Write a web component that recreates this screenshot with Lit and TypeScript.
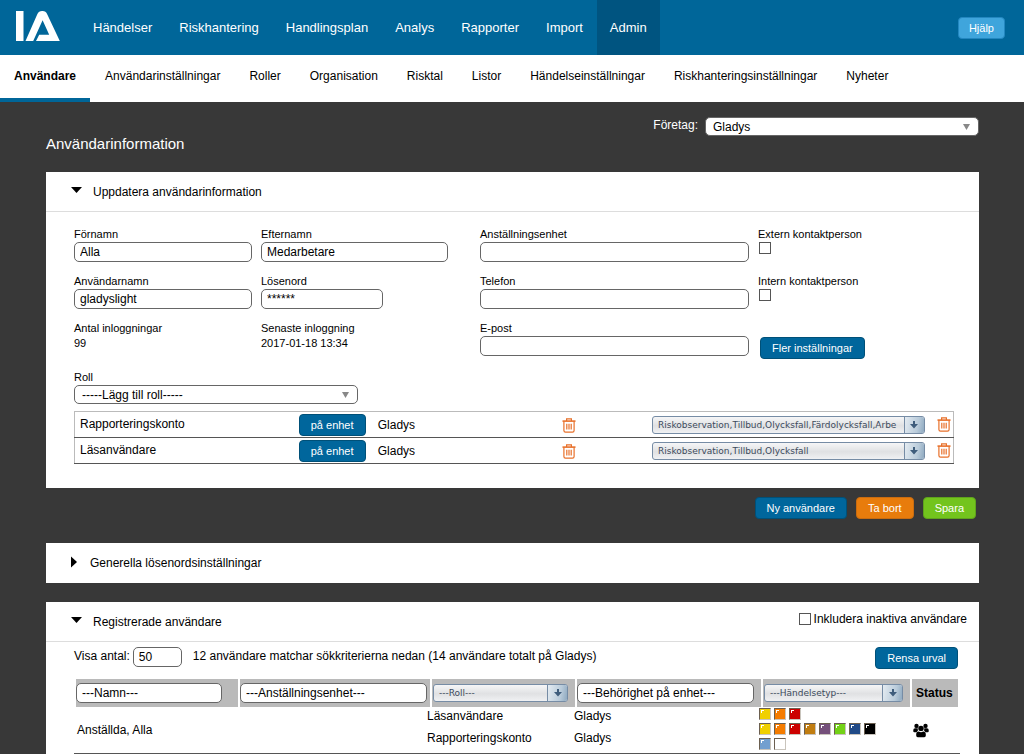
import { LitElement, html, svg, css, nothing } from "lit";
import { customElement, property, state } from "lit/decorators.js";
import { classMap } from "lit/directives/class-map.js";

const controls = css`
  *,
  *::before {
    box-sizing: border-box;
  }
  button,
  input,
  select {
    font-family: inherit;
    margin: 0;
  }
  .btn {
    height: 22px;
    padding: 0 11px;
    border: 1px solid #005078;
    border-radius: 4px;
    background: #00669c;
    color: #fff;
    font-size: 11px;
    line-height: 18px;
    white-space: nowrap;
    cursor: pointer;
  }
  .btn.orange {
    background: #e87c0c;
    border-color: #c96c10;
  }
  .btn.green {
    background: #73c41d;
    border-color: #5fa31c;
  }
  .btn.light {
    background: #3fa5dc;
    border-color: #2387c0;
  }
  .text {
    display: block;
    width: 100%;
    height: 20px;
    padding: 0 5px;
    border: 1px solid #666;
    border-radius: 5px;
    background: #fff;
    color: #000;
    font-size: 12px;
  }
  .check {
    appearance: none;
    width: 12px;
    height: 12px;
    border: 1px solid #555;
    background: #fff;
    flex: none;
  }
  .check:checked {
    background: #00669c;
  }
`;

@customElement("drop-down")
class DropDown extends LitElement {
  @property({ type: Array }) options: string[] = [];
  @property() name = "";
  @property() variant: "plain" | "combo" = "plain";

  static styles = [
    controls,
    css`
      :host {
        display: block;
        min-width: 0;
      }
      .wrap {
        display: grid;
        height: 19px;
        border: 1px solid #666;
        border-radius: 5px;
        background: #fff;
        overflow: hidden;
      }
      select {
        grid-area: 1 / 1;
        appearance: none;
        width: 100%;
        min-width: 0;
        border: 0;
        padding: 0 20px 0 7px;
        background: transparent;
        color: #000;
        font-size: 12px;
      }
      .arrow {
        grid-area: 1 / 1;
        justify-self: end;
        align-self: center;
        margin-right: 8px;
        pointer-events: none;
      }
      .combo {
        height: 18px;
        border-color: #768ca5;
        border-radius: 3px;
        background: linear-gradient(#f6f6f7, #e0e1e3 55%, #f0f1f3);
      }
      .combo select {
        padding: 0 20px 0 5px;
        color: #3c4a5c;
        font-family: "DejaVu Sans", Verdana, sans-serif;
        font-size: 9px;
      }
      .combo .arrow {
        display: grid;
        place-items: center;
        align-self: stretch;
        width: 20px;
        margin: 0;
        border-left: 1px solid #768ca5;
        background: linear-gradient(100deg, #e4ebf1, #b9cbda 65%, #8ea9c0);
      }
    `,
  ];

  render() {
    const combo = this.variant === "combo";
    return html`<div class=${classMap({ wrap: true, combo })}>
      <select aria-label=${this.name}>
        ${this.options.map((o) => html`<option>${o}</option>`)}
      </select>
      <span class="arrow">
        ${combo
          ? html`<svg width="8" height="8" viewBox="0 0 8 8" display="block">
              <path d="M3 0h2v3h3L4 7.5 0 3h3z" fill="#3f5d7c" />
            </svg>`
          : html`<svg width="7" height="6" viewBox="0 0 7 6" display="block">
              <path d="M0 0h7L3.5 6z" fill="#888" />
            </svg>`}
      </span>
    </div>`;
  }
}

const trash = html`<svg width="14" height="15" viewBox="0 0 14 15" display="block">
  <g fill="none" stroke="#e8702a" stroke-width="1.2">
    <path d="M1.9 3.2v9.4q0 1.6 1.6 1.6h7q1.6 0 1.6-1.6V3.2M4.6 3V0.8h4.8V3" />
    <path d="M0.5 3.1h13" stroke-width="1.6" />
    <path d="M4.8 5.8v5.7M7 5.8v5.7M9.2 5.8v5.7" />
  </g>
</svg>`;

const people = html`<svg width="16" height="15" viewBox="0 0 16 15" role="img" aria-label="Aktiv">
  <circle cx="3.5" cy="2.9" r="2.2" />
  <circle cx="12.5" cy="2.9" r="2.2" />
  <path d="M0.3 8.2V7q0-1.8 1.8-1.8h2.6l.2 2.6-1.4 1.4H1.3q-1 0-1-1zM15.7 8.2V7q0-1.8-1.8-1.8h-2.6l-.2 2.6 1.4 1.4h2.2q1 0 1-1z" />
  <circle cx="8" cy="5.4" r="2.7" />
  <path d="M3.2 12.6V11.4q0-2.8 2.6-2.8Q8 9.8 10.2 8.6 12.8 8.6 12.8 11.4v1.2q0 1.6-1.5 1.6H4.7Q3.2 14.2 3.2 12.6z" />
</svg>`;

const logo = svg`
  <path d="M0 0h7.5v30H0z" />
  <path d="M9.5 30 21.3 3.2Q22.8 0 26 0h.6q3.2 0 4.6 3.2L43.8 30H20l3.2-6.3h10L26.6 9.2 17.2 30z" />
`;

const MAIN = ["Händelser", "Riskhantering", "Handlingsplan", "Analys", "Rapporter", "Import", "Admin"];
const SUB = [
  "Användare", "Användarinställningar", "Roller", "Organisation", "Risktal", "Listor",
  "Händelseinställningar", "Riskhanteringsinställningar", "Nyheter",
];
const ROLES = [
  { role: "Rapporteringskonto", unit: "Gladys", types: "Riskobservation,Tillbud,Olycksfall,Färdolycksfall,Arbe" },
  { role: "Läsanvändare", unit: "Gladys", types: "Riskobservation,Tillbud,Olycksfall" },
];
const USERS = [
  {
    name: "Anställda, Alla",
    roles: [
      { role: "Läsanvändare", unit: "Gladys", marks: ["yellow", "amber", "red"] },
      {
        role: "Rapporteringskonto",
        unit: "Gladys",
        marks: ["yellow", "amber", "red", "brown", "purple", "lime", "navy", "black", "sky", "white"],
      },
    ],
  },
];

@customElement("app-root")
class AppRoot extends LitElement {
  @state() private open: Record<string, boolean> = { update: true, password: false, users: true };

  static styles = [
    controls,
    css`
      :host {
        display: block;
        min-height: 100vh;
        background: #383838;
        color: #000;
        font-family: "Liberation Sans", Arial, sans-serif;
        font-size: 12px;
        line-height: 14px;
      }
      a {
        color: inherit;
        text-decoration: none;
      }
      .top {
        display: flex;
        align-items: stretch;
        height: 55px;
        padding: 0 19px 0 16px;
        background: #006699;
        color: #fff;
      }
      .logo {
        align-self: center;
        display: block;
        margin: 0 19px 3px 0;
      }
      .main {
        display: flex;
        flex: 1;
        gap: 1px;
        font-size: 13px;
      }
      .main a {
        display: flex;
        align-items: center;
        padding: 0 13px;
      }
      .main a.on {
        background: #005480;
      }
      .top .btn {
        align-self: center;
        padding: 0 10px;
      }
      .sub {
        display: flex;
        gap: 1px;
        height: 47px;
        background: #fff;
      }
      .sub a {
        padding: 14px 14px 0;
        border-bottom: 4px solid transparent;
      }
      .sub a.on {
        border-color: #006699;
        font-weight: bold;
      }
      main {
        padding: 16px 45px 0 46px;
      }
      .company {
        display: flex;
        justify-content: flex-end;
        gap: 7px;
        color: #fff;
      }
      .company drop-down {
        width: 274px;
        margin-top: -1px;
      }
      h1 {
        margin: 0 0 20px;
        color: #fff;
        font-size: 15px;
        font-weight: normal;
        line-height: 16px;
      }
      .panel {
        background: #fff;
      }
      .head {
        display: flex;
        align-items: center;
        justify-content: space-between;
        height: 40px;
        padding: 0 12px 0 25px;
      }
      .head.open {
        border-bottom: 1px solid #ddd;
      }
      h2 {
        margin: 0;
        font-size: 12px;
        font-weight: normal;
      }
      .toggle {
        display: flex;
        align-items: center;
        gap: 11px;
        padding: 0;
        border: 0;
        background: none;
        color: inherit;
        font-size: 12px;
        line-height: 14px;
        cursor: pointer;
      }
      .inactive {
        display: flex;
        align-items: center;
        gap: 3px;
        padding-bottom: 6px;
      }
      .form {
        padding: 15px 25px 24px 28px;
      }
      .fields {
        display: grid;
        grid-template-columns: 187fr 219fr 278fr 196fr;
        row-gap: 12px;
        font-size: 11px;
      }
      .field {
        display: grid;
        align-content: start;
        justify-items: start;
        row-gap: 1px;
        padding-right: 9px;
      }
      .field.wide {
        padding-right: 32px;
      }
      .field .short {
        width: 122px;
      }
      .field .check {
        margin: 0 1px;
      }
      .action {
        display: flex;
        align-items: flex-start;
        padding: 16px 2px 0;
        height: 35px;
      }
      .add {
        display: grid;
        gap: 1px;
        width: 284px;
        margin: 14px 0 7px;
        font-size: 11px;
      }
      table {
        width: 100%;
        border-collapse: collapse;
      }
      .roles {
        table-layout: fixed;
        border: 1px solid #bbb;
      }
      .roles td {
        height: 26px;
        padding: 0;
        border-bottom: 1px solid #555;
      }
      .roles td:first-child {
        padding: 0 0 2px 5px;
      }
      .roles td.del {
        padding-top: 2px;
      }
      .c-role {
        width: 25.5%;
      }
      .c-btn {
        width: 9%;
      }
      .c-unit {
        width: 21%;
      }
      .c-del {
        width: 10.2%;
      }
      .c-type {
        width: 32.4%;
      }
      .roles .btn {
        display: block;
        width: 67px;
        padding: 0;
      }
      .roles drop-down {
        width: 273px;
      }
      .icon {
        display: block;
        padding: 0;
        border: 0;
        background: none;
        cursor: pointer;
      }
      .actions {
        display: flex;
        justify-content: flex-end;
        gap: 9px;
        padding: 9px 3px 24px;
      }
      .gap {
        height: 19px;
      }
      .list {
        padding: 5px 19px 0 28px;
      }
      .bar {
        display: flex;
        align-items: flex-start;
        padding: 0 2px 10px 0;
      }
      .bar label,
      .bar p {
        margin: 0;
        padding-top: 2px;
      }
      .bar .text {
        width: 49px;
        margin: 0 11px 0 3px;
      }
      .bar p {
        flex: 1;
      }
      .users {
        display: block;
      }
      .users thead,
      .users tbody {
        display: block;
      }
      .users thead tr {
        display: grid;
        grid-template-columns: 162fr 190fr 143fr 184fr 147fr 46px;
        gap: 2px;
        padding: 0 2px;
      }
      .users th {
        display: grid;
        align-items: center;
        height: 28px;
        padding: 0 7px 0 0;
        background: #bababa;
        text-align: left;
        font-weight: bold;
      }
      .users th.name {
        padding-right: 16px;
      }
      .users th.unit {
        padding-right: 3px;
      }
      .users th.combo {
        padding-left: 1px;
      }
      .users th.status {
        padding: 0 0 0 4px;
      }
      .users tbody tr {
        display: grid;
        grid-template-columns: 353fr 147fr 185fr 152fr 49px;
        height: 47px;
        border-bottom: 1px solid #555;
      }
      .users td {
        padding: 0;
      }
      .users td.who {
        align-self: center;
        padding-left: 3px;
      }
      .users td.state {
        align-self: center;
        padding-left: 2px;
        line-height: 0;
      }
      .lines {
        display: grid;
        gap: 8px;
        padding-top: 2px;
        line-height: 14px;
        margin: 0;
      }
      .marks {
        display: flex;
        flex-wrap: wrap;
        gap: 3px;
        width: 120px;
        padding-top: 1px;
        margin-bottom: 2px;
      }
      .mark {
        width: 12px;
        height: 12px;
        border: 1px solid;
        border-color: #6b5f50 #c9c4bc #c9c4bc #6b5f50;
      }
      .mark::before {
        content: "";
        display: block;
        width: 3px;
        height: 3px;
        margin: 1px;
        border: solid #fff;
        border-width: 1px 0 0 1px;
      }
      .yellow { background: #f0d000; }
      .amber { background: #f57c00; }
      .red { background: #cc0000; }
      .brown { background: #c17d11; }
      .purple { background: #75507b; }
      .lime { background: #73d216; }
      .navy { background: #204a87; }
      .black { background: #000; }
      .sky { background: #729fcf; }
      .white { background: #fff; }
    `,
  ];

  private head(key: string, title: string, extra: unknown = nothing) {
    const open = this.open[key];
    return html`<div class=${classMap({ head: true, open })}>
      <h2>
        <button
          class="toggle"
          aria-expanded=${open ? "true" : "false"}
          @click=${() => (this.open = { ...this.open, [key]: !open })}
        >
          ${open
            ? html`<svg width="11" height="10" viewBox="0 0 11 10"><path d="M0 0h11L5.5 6z" /></svg>`
            : html`<svg width="8" height="14" viewBox="0 0 8 14"><path d="M0 0.5v11L6 6z" /></svg>`}
          ${title}
        </button>
      </h2>
      ${extra}
    </div>`;
  }

  private field(id: string, label: string, value = "", wide = false, short = false) {
    return html`<div class=${classMap({ field: true, wide })}>
      <label for=${id}>${label}</label>
      <input id=${id} class=${classMap({ text: true, short })} .value=${value} />
    </div>`;
  }

  private tick(id: string, label: string) {
    return html`<div class="field">
      <label for=${id}>${label}</label>
      <input id=${id} class="check" type="checkbox" />
    </div>`;
  }

  render() {
    return html`
      <header class="top">
        <svg class="logo" width="45" height="30" viewBox="0 0 45 30" fill="#fff" role="img" aria-label="IA">
          ${logo}
        </svg>
        <nav class="main">
          ${MAIN.map((t) => html`<a href="#" class=${classMap({ on: t === "Admin" })}>${t}</a>`)}
        </nav>
        <button class="btn light">Hjälp</button>
      </header>
      <nav class="sub">
        ${SUB.map((t, i) => html`<a href="#" class=${classMap({ on: i === 0 })}>${t}</a>`)}
      </nav>
      <main>
        <div class="company">
          <span>Företag:</span>
          <drop-down name="Företag" .options=${["Gladys"]}></drop-down>
        </div>
        <h1>Användarinformation</h1>

        <section class="panel">
          ${this.head("update", "Uppdatera användarinformation")}
          ${this.open.update ? this.form() : nothing}
        </section>
        <div class="actions">
          <button class="btn">Ny användare</button>
          <button class="btn orange">Ta bort</button>
          <button class="btn green">Spara</button>
        </div>

        <section class="panel">${this.head("password", "Generella lösenordsinställningar")}</section>
        <div class="gap"></div>

        <section class="panel">
          ${this.head(
            "users",
            "Registrerade användare",
            html`<label class="inactive"><input class="check" type="checkbox" />Inkludera inaktiva användare</label>`
          )}
          ${this.open.users ? this.list() : nothing}
        </section>
      </main>
    `;
  }

  private form() {
    return html`<div class="form">
      <div class="fields">
        ${this.field("first", "Förnamn", "Alla")}
        ${this.field("last", "Efternamn", "Medarbetare", true)}
        ${this.field("unit", "Anställningsenhet")}
        ${this.tick("extern", "Extern kontaktperson")}
        ${this.field("user", "Användarnamn", "gladyslight")}
        ${this.field("pass", "Lösenord", "******", true, true)}
        ${this.field("phone", "Telefon")}
        ${this.tick("intern", "Intern kontaktperson")}
        <div class="field"><span>Antal inloggningar</span><span>99</span></div>
        <div class="field"><span>Senaste inloggning</span><span>2017-01-18 13:34</span></div>
        ${this.field("mail", "E-post")}
        <div class="action"><button class="btn">Fler inställningar</button></div>
      </div>
      <div class="add">
        <span>Roll</span>
        <drop-down name="Roll" .options=${["-----Lägg till roll-----"]}></drop-down>
      </div>
      <table class="roles">
        <colgroup>
          <col class="c-role" /><col class="c-btn" /><col class="c-unit" /><col class="c-del" />
          <col class="c-type" /><col />
        </colgroup>
        <tbody>
          ${ROLES.map(
            (r) => html`<tr>
              <td>${r.role}</td>
              <td><button class="btn">på enhet</button></td>
              <td>${r.unit}</td>
              <td class="del"><button class="icon" aria-label="Ta bort enhet">${trash}</button></td>
              <td><drop-down variant="combo" name="Händelsetyper" .options=${[r.types]}></drop-down></td>
              <td><button class="icon" aria-label="Ta bort roll">${trash}</button></td>
            </tr>`
          )}
        </tbody>
      </table>
    </div>`;
  }

  private list() {
    return html`<div class="list">
      <div class="bar">
        <label for="count">Visa antal:</label>
        <input id="count" class="text" .value=${"50"} />
        <p>12 användare matchar sökkriterierna nedan (14 användare totalt på Gladys)</p>
        <button class="btn">Rensa urval</button>
      </div>
      <table class="users">
        <thead>
          <tr>
            <th class="name"><input class="text" aria-label="Namn" .value=${"---Namn---"} /></th>
            <th class="unit"><input class="text" aria-label="Anställningsenhet" .value=${"---Anställningsenhet---"} /></th>
            <th class="combo"><drop-down variant="combo" name="Roll" .options=${["---Roll---"]}></drop-down></th>
            <th><input class="text" aria-label="Behörighet" .value=${"---Behörighet på enhet---"} /></th>
            <th class="combo"><drop-down variant="combo" name="Händelsetyp" .options=${["---Händelsetyp---"]}></drop-down></th>
            <th class="status">Status</th>
          </tr>
        </thead>
        <tbody>
          ${USERS.map(
            (u) => html`<tr>
              <td class="who">${u.name}</td>
              <td><div class="lines">${u.roles.map((r) => html`<span>${r.role}</span>`)}</div></td>
              <td><div class="lines">${u.roles.map((r) => html`<span>${r.unit}</span>`)}</div></td>
              <td>
                ${u.roles.map(
                  (r) => html`<div class="marks">
                    ${r.marks.map((m) => html`<span class=${classMap({ mark: true, [m]: true })}></span>`)}
                  </div>`
                )}
              </td>
              <td class="state">${people}</td>
            </tr>`
          )}
        </tbody>
      </table>
    </div>`;
  }
}
